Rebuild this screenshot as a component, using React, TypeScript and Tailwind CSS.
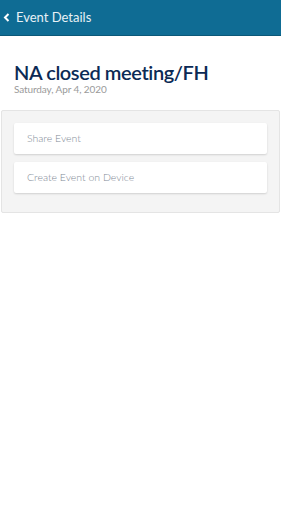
import React from "react";

const actions = ["Share Event", "Create Event on Device"];

export default function App() {
  return (
    <div className="w-[281px] h-[512px] bg-white font-['Lato','Noto_Sans',sans-serif]">
      <header className="h-[36px] bg-[#0f6c94] border-b border-[#0b5878] flex items-center pl-[3px] gap-[6px]">
        <svg width="7" height="9" viewBox="0 0 7 9" className="text-white">
          <path d="M5.5 1 L2 4.5 L5.5 8" fill="none" stroke="currentColor" strokeWidth="2" />
        </svg>
        <span className="text-[13px] text-[#e8f1f6] leading-none">Event Details</span>
      </header>

      <div className="px-[14px] pt-[25px] pb-[15px]">
        <h1 className="text-[20px] leading-[22px] font-semibold text-[#0b2a55] tracking-[-0.4px]">
          NA closed meeting/FH
        </h1>
        <p className="text-[10px] leading-[12px] text-[#9a9a9a] tracking-[-0.1px]">Saturday, Apr 4, 2020</p>
      </div>

      <div className="mx-[1px] bg-[#f4f4f4] border border-[#e4e4e4] rounded-[2px] px-[12px] pt-[12px] pb-[19px] flex flex-col gap-[8px]">
        {actions.map((a) => (
          <div
            key={a}
            className="h-[31px] bg-white rounded-[2px] shadow-[0_1px_2px_rgba(0,0,0,0.15)] flex items-center pl-[13px] text-[10.5px] font-light text-[#7f8a96]"
          >
            {a}
          </div>
        ))}
      </div>
    </div>
  );
}
